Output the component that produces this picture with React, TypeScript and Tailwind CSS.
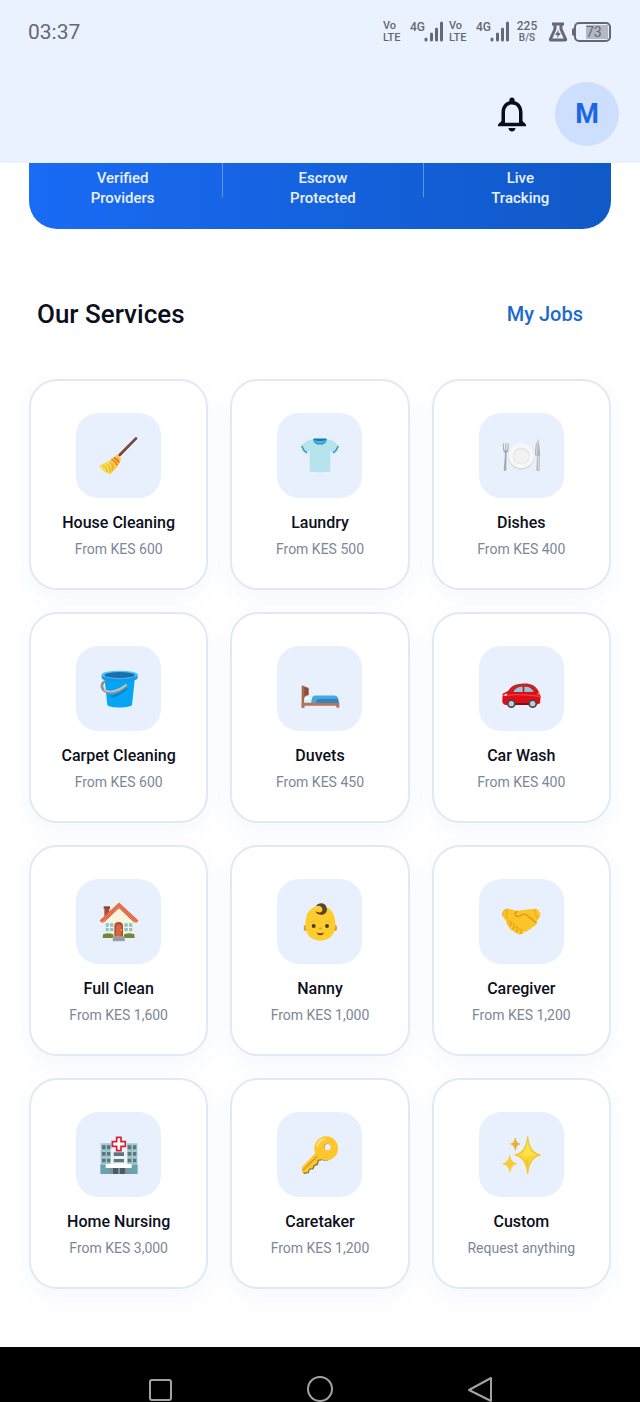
import { Fragment, type ReactNode } from "react";
import { MdNotificationsNone } from "react-icons/md";

interface Service {
  name: string;
  price: string;
  icon: ReactNode;
}

const stats = [
  ["Verified", "Providers"],
  ["Escrow", "Protected"],
  ["Live", "Tracking"],
];

// All service drawings share a 120 x 120 grid
function Drawing({ children }: { children: ReactNode }) {
  return (
    <svg viewBox="0 0 120 120" className="h-10 w-10" aria-hidden="true">
      {children}
    </svg>
  );
}

const broom = (
  <Drawing>
    <path d="M62 57L111 7" stroke="#6d4037" strokeWidth="8" strokeLinecap="round" />
    <path d="M62 54L109 7" stroke="#8f5d4d" strokeWidth="3" strokeLinecap="round" />
    <path d="M54 55L66 67C62 88 48 101 35 113C29 118 1 98 2 88C20 82 40 72 54 55Z" fill="#fbc936" />
    <path d="M2 88C12 84 22 80 30 75C36 86 38 100 35 113C27 118 1 98 2 88Z" fill="#f9dc5b" />
    <path d="M12 89C20 92 24 98 24 108M22 83C32 90 34 100 33 110M34 80C42 86 42 94 40 103" stroke="#e2a61e" strokeWidth="3" fill="none" />
    <path d="M37 69C46 73 52 80 54 88M44 64C52 68 58 74 60 80" stroke="#e2643b" strokeWidth="4" fill="none" />
  </Drawing>
);

const shirt = (
  <Drawing>
    <path d="M41 9C52 13 68 13 79 9C98 13 109 19 116 32L100 51L91 44V106C82 110 38 110 29 106V44L20 51L4 32C11 19 22 13 41 9Z" fill="#b6e3ec" />
    <path d="M5 30C8 39 13 46 21 51M115 30C112 39 107 46 99 51" stroke="#2d9fd6" strokeWidth="5" fill="none" />
    <path d="M41 9C46 29 74 29 79 9" stroke="#2d9fd6" strokeWidth="5" fill="#62b9e2" />
    <path d="M42 9C53 16 67 16 78 9Z" fill="#1479b8" stroke="#1479b8" strokeWidth="3" />
  </Drawing>
);

const dishes = (
  <Drawing>
    <path d="M5 22L7 45Q9 50 12 51L8 103Q11 107 16 103L17 51Q21 49 22 45L23 22H20L19 43H16V22H13V43H10L8 22Z" fill="#a8abad" />
    <path d="M113 9Q101 20 102 58L108 60L106 103Q111 107 116 103V60L118 57Z" fill="#b4b6b8" />
    <path d="M113 12Q106 26 107 56M112 60V102" stroke="#d9dadb" strokeWidth="3" fill="none" />
    <circle cx="61" cy="62" r="39" fill="#d4d6d8" />
    <circle cx="61" cy="59" r="38" fill="#f7f7f7" />
    <circle cx="61" cy="60" r="25" fill="#e1e2e3" />
    <circle cx="61" cy="61" r="22" fill="#f2f2f2" />
  </Drawing>
);

const bucket = (
  <Drawing>
    <path d="M16 24L25 108C30 118 92 118 99 108L108 24Z" fill="#04a5f4" />
    <path d="M8 17V27C12 42 112 42 116 27V17Z" fill="#1799df" />
    <ellipse cx="62" cy="17" rx="54" ry="12" fill="#4fc3f7" />
    <ellipse cx="62" cy="18" rx="46" ry="9" fill="#176fae" />
    <path d="M35 83C52 80 68 73 83 58" stroke="#0783c8" strokeWidth="6" fill="none" />
    <path d="M17 38C6 44 6 58 17 66C32 76 62 68 82 50" stroke="#919191" strokeWidth="8" strokeLinecap="round" fill="none" />
    <path d="M17 63C32 73 60 65 81 48" stroke="#c5c5c5" strokeWidth="5" strokeLinecap="round" fill="none" />
  </Drawing>
);

const bed = (
  <Drawing>
    <path d="M5 51Q9 48 13 52L26 57V81L13 86V116H5Z" fill="#a9674f" />
    <path d="M13 54L25 58V77L13 81Z" fill="#8d4f3c" />
    <path d="M13 87Q16 78 26 79L44 82V103H13Z" fill="#d8eff7" />
    <path d="M15 88Q23 80 38 87Q36 93 15 92Z" fill="#f5fcff" />
    <path d="M42 80H105Q116 82 117 102H35Q34 86 42 80Z" fill="#2b87c8" />
    <path d="M44 80H105Q112 82 114 89H58Q48 89 48 102H35Q34 84 44 80Z" fill="#49a9df" />
    <path d="M5 101H118V116H110L108 110H13V116H5Z" fill="#b8735a" />
  </Drawing>
);

const car = (
  <Drawing>
    <path d="M5 74L21 66C31 52 40 45 62 44C87 42 99 47 112 65L119 82L117 103Q110 108 97 108H14Q3 105 4 94Z" fill="#dc0d18" />
    <path d="M24 66C38 49 48 46 62 46C85 43 98 47 110 65L100 65C90 53 77 51 60 53C47 55 38 61 30 70Z" fill="#b92b29" />
    <path d="M37 69C43 57 51 53 65 53V69ZM70 53C84 52 92 58 99 68L70 69Z" fill="#91cbdc" />
    <path d="M6 80C32 76 70 75 118 82" stroke="#f0443e" strokeWidth="4" fill="none" />
    <path d="M7 79L18 73L17 81Z" fill="#fff2d0" />
    <path d="M112 68L117 78L109 76Z" fill="#ff7b42" />
    <path d="M42 105H84" stroke="#7d1118" strokeWidth="6" />
    <circle cx="31" cy="104" r="13" fill="#4b4548" />
    <circle cx="95" cy="104" r="13" fill="#4b4548" />
    <circle cx="31" cy="104" r="8" fill="#c8cacc" />
    <circle cx="95" cy="104" r="8" fill="#c8cacc" />
  </Drawing>
);

const house = (
  <Drawing>
    <path d="M16 15H31V46H16Z" fill="#ad4c35" />
    <path d="M14 13H33V20H14Z" fill="#874235" />
    <path d="M17 56L60 13L105 56V107H17Z" fill="#fbf3dc" />
    <path d="M5 59L60 8L115 59" stroke="#ec6c42" strokeWidth="10" fill="none" />
    <path d="M13 61L60 17L107 61" stroke="#b94730" strokeWidth="3" fill="none" />
    <path d="M20 64H43V88H20ZM76 64H100V88H76Z" fill="#8bc4c1" />
    <path d="M31 64V88M20 76H43M88 64V88M76 76H100" stroke="#fff" strokeWidth="3" />
    <path d="M46 106V72Q46 60 59 60Q72 60 72 72V106Z" fill="#b64c32" />
    <path d="M51 103V73Q59 60 67 73V103Z" fill="#d16643" />
    <circle cx="67" cy="84" r="2" fill="#fbd66b" />
    <path d="M12 97Q28 91 43 97V108H11ZM75 97Q92 91 106 97L107 108H75Z" fill="#71883c" />
    <path d="M43 103H77V118H41Z" fill="#a5a8aa" />
    <path d="M43 108H77M41 113H78" stroke="#84888b" strokeWidth="2" />
  </Drawing>
);

const baby = (
  <Drawing>
    <ellipse cx="17" cy="78" rx="6" ry="9" fill="#d69b2b" />
    <ellipse cx="105" cy="78" rx="6" ry="9" fill="#d69b2b" />
    <path d="M61 12C90 12 106 32 106 67C106 100 88 116 61 116S16 100 16 67C16 32 32 12 61 12Z" fill="#fecd2d" />
    <path d="M47 13C56 0 76 1 80 17C84 34 68 43 53 36C50 34 47 31 47 28C57 35 70 30 67 20C65 11 55 9 47 13Z" fill="#58402c" />
    <path d="M55 9C68 4 78 14 73 26" stroke="#6e4d31" strokeWidth="2" fill="none" />
    <circle cx="41" cy="72" r="6" fill="#4b3a2c" />
    <circle cx="81" cy="72" r="6" fill="#4b3a2c" />
    <path d="M33 60Q40 55 46 59M76 59Q83 55 89 60" stroke="#efb526" strokeWidth="3" fill="none" />
    <path d="M56 78Q61 75 66 78Q61 86 56 78Z" fill="#f28b22" />
    <path d="M49 91Q61 97 73 91Q69 100 61 100Q53 100 49 91Z" fill="#754434" />
  </Drawing>
);

const handshake = (
  <Drawing>
    <path d="M21 20L48 26L72 23L99 20L107 21Q119 29 118 43L106 60Q108 65 104 68Q100 76 94 75Q91 84 83 83Q79 91 69 89Q66 99 58 96Q50 99 47 92Q37 94 35 84Q24 84 25 74Q15 71 17 60L5 43Q3 29 17 20Z" fill="#fcc429" />
    <path d="M48 28C35 37 45 47 57 42C66 34 72 34 79 41L106 62" stroke="#d99516" strokeWidth="4" strokeLinecap="round" fill="none" />
    <path d="M19 61Q26 54 31 60Q28 65 25 74Q35 60 41 66L34 84Q43 71 50 75L46 91Q57 75 62 84L58 96" stroke="#e2a01b" strokeWidth="3" fill="none" />
    <path d="M6 42Q3 28 17 22Q20 34 16 48M104 22Q100 34 110 50" stroke="#efad20" strokeWidth="4" fill="none" />
  </Drawing>
);

const hospital = (
  <Drawing>
    <path d="M5 25H37V93H5ZM84 25H115V93H84Z" fill="#a0c7cd" />
    <path d="M35 40H85V101H35Z" fill="#edf2f4" />
    <path d="M9 31H20V43H9ZM24 31H34V43H24ZM9 51H20V62H9ZM24 51H34V62H24ZM9 71H20V82H9ZM24 71H34V82H24ZM86 31H97V43H86ZM102 31H112V43H102ZM86 51H97V62H86ZM102 51H112V62H102ZM86 71H97V82H86ZM102 71H112V82H102ZM44 52H75V63H44ZM44 72H75V82H44Z" fill="#597681" />
    <path d="M4 89H116V117H4Z" fill="#69a4ac" />
    <path d="M32 98H89V117H32Z" fill="#80929b" />
    <path d="M42 99H57V117H42ZM63 99H78V117H63Z" fill="#455c66" />
    <path d="M20 87H98V99H20Z" fill="#fff" />
    <path d="M53 7H66V20H79V34H66V47H53V34H40V20H53Z" fill="#fff" stroke="#d91e36" strokeWidth="5" />
  </Drawing>
);

const keyIcon = (
  <Drawing>
    <path fillRule="evenodd" d="M84 8A34 35 0 1 1 65 76L57 78L54 90L44 94L41 103L30 104L26 115L12 117L7 108L9 99L50 57A34 35 0 0 1 84 8ZM83 27A10 10 0 1 0 84 47A10 10 0 0 0 83 27Z" fill="#8f8236" />
    <path fillRule="evenodd" d="M79 4A36 36 0 1 1 64 73L53 74L50 86L40 91L37 99L27 101L23 112L10 112L5 105L6 96L46 55A36 36 0 0 1 79 4ZM82 26A10 10 0 1 0 82 46A10 10 0 0 0 82 26Z" fill="#fdc62d" />
    <path d="M10 104L50 65" stroke="#dc951f" strokeWidth="4" strokeLinecap="round" />
    <path d="M52 33Q57 15 73 12" stroke="#ffe57c" strokeWidth="6" strokeLinecap="round" fill="none" />
  </Drawing>
);

const sparkles = (
  <Drawing>
    <path d="M80 6Q84 52 117 60Q84 68 80 115Q76 68 43 60Q76 52 80 6Z" fill="#fcd638" stroke="#f4c52d" strokeWidth="4" strokeLinejoin="round" />
    <path d="M80 18Q82 53 105 60Q80 58 75 66Q73 59 59 60Q76 53 80 18Z" fill="#ffe34b" />
    <path d="M43 9Q45 25 57 27Q45 30 43 46Q40 30 29 27Q40 25 43 9Z" fill="#eaae31" stroke="#eaae31" strokeWidth="2" />
    <path d="M26 61Q29 83 48 86Q30 90 27 112Q23 90 5 86Q23 83 26 61Z" fill="#f9cb39" stroke="#f9cb39" strokeWidth="2" />
    <path d="M83 70L80 115Q76 86 72 76Z" fill="#f5c52e" />
  </Drawing>
);

const services: Service[] = [
  { name: "House Cleaning", price: "From KES 600", icon: broom },
  { name: "Laundry", price: "From KES 500", icon: shirt },
  { name: "Dishes", price: "From KES 400", icon: dishes },
  { name: "Carpet Cleaning", price: "From KES 600", icon: bucket },
  { name: "Duvets", price: "From KES 450", icon: bed },
  { name: "Car Wash", price: "From KES 400", icon: car },
  { name: "Full Clean", price: "From KES 1,600", icon: house },
  { name: "Nanny", price: "From KES 1,000", icon: baby },
  { name: "Caregiver", price: "From KES 1,200", icon: handshake },
  { name: "Home Nursing", price: "From KES 3,000", icon: hospital },
  { name: "Caretaker", price: "From KES 1,200", icon: keyIcon },
  { name: "Custom", price: "Request anything", icon: sparkles },
];

function Signal() {
  return (
    <div className="flex items-start gap-2">
      <div className="w-[19px] text-[11px] font-medium leading-3">
        <div>Vo</div>
        <div>LTE</div>
      </div>
      <div className="flex h-[22px]">
        <span className="w-[14px] text-[12px] font-medium leading-[14px]">4G</span>
        <svg viewBox="0 0 19 22" className="h-[22px] w-[19px]" aria-hidden="true">
          <path d="M2 19V20M7.500 14V20M12.500 9V20M17.500 3V20" stroke="currentColor" strokeWidth="3" strokeLinecap="round" />
        </svg>
      </div>
    </div>
  );
}

function StatusBar() {
  return (
    <div className="flex h-16 items-center justify-between pl-7 pr-[29px] text-[#656973]">
      <span className="text-[21px] leading-6">03:37</span>
      <div className="flex items-center gap-[6px]">
        <Signal />
        <Signal />
        <div className="ml-px w-[22px] text-center font-medium">
          <div className="text-[12px] leading-3">225</div>
          <div className="text-[10px] leading-3">B/S</div>
        </div>
        <div className="ml-1 flex items-center gap-1">
          <svg viewBox="0 0 20 20" className="h-5 w-5" fill="none" stroke="currentColor" aria-hidden="true">
            <path d="M4 2H16M7 2V7L2.500 17Q2 18 3 18H17Q18 18 17.500 17L13 7V2" strokeWidth="3" strokeLinejoin="round" />
            <path d="M10.500 8L7 13H9.500L9 16L13 11H10.500Z" fill="currentColor" stroke="none" />
          </svg>
          <div className="flex items-center">
            <span className="h-2 w-[2px] rounded-l bg-[#656973]" />
            <div className="h-5 w-[37px] rounded-[5px] border-2 border-[#656973] p-px">
              <div className="ml-[9px] flex h-full items-center bg-[#b4b8c2] text-[14px]">73</div>
            </div>
          </div>
        </div>
      </div>
    </div>
  );
}

function ServiceCard({ service }: { service: Service }) {
  return (
    <button
      type="button"
      className="flex flex-col items-center rounded-[28px] border-2 border-[#e2e8f4] bg-white pb-[29px] pt-8 shadow-[0_8px_24px_rgba(30,100,240,0.05)]"
    >
      <span className="flex h-[85px] w-[85px] items-center justify-center rounded-[22px] bg-[#e8f0fe]">
        {service.icon}
      </span>
      <span className="mt-[13px] whitespace-nowrap text-[16px] font-medium leading-6 text-[#0b0f1c]">{service.name}</span>
      <span className="mt-1 whitespace-nowrap text-[14px] leading-5 text-[#7c8799]">{service.price}</span>
    </button>
  );
}

export default function App() {
  return (
    <div className="bg-white font-[Roboto,sans-serif]">
      <header className="bg-[#ebf2ff]">
        <StatusBar />
        <div className="flex items-center justify-end gap-[22px] pb-[17px] pr-[21px] pt-[18px]">
          <button type="button" aria-label="Notifications" className="text-[#080d19]">
            <MdNotificationsNone className="h-[42px] w-[42px]" />
          </button>
          <button
            type="button"
            aria-label="Profile"
            className="h-16 w-16 rounded-full bg-[#cddffc] text-[27px] font-bold text-[#1c66e5]"
          >
            M
          </button>
        </div>
      </header>

      <main className="px-[29px]">
        <section className="flex items-start justify-around rounded-b-[28px] bg-linear-to-r from-[#1a6bf5] to-[#1059c8] px-7 pb-[21px] text-center text-[15px] font-medium leading-5 text-[#e9f2ff]">
          {stats.map(([top, bottom], index) => (
            <Fragment key={top}>
              {index > 0 && <div className="h-[34px] w-px bg-[#5c97f2]" />}
              <p className="pt-[5px]">
                {top}
                <br />
                {bottom}
              </p>
            </Fragment>
          ))}
        </section>

        <div className="mt-[69px] flex items-center justify-between pl-2 pr-7">
          <h1 className="text-[26px] font-medium leading-8 text-[#0b0f1c]">Our Services</h1>
          <a href="#jobs" className="text-[20px] font-medium leading-8 text-[#1e68cf]">
            My Jobs
          </a>
        </div>

        <section className="mt-[49px] grid grid-cols-3 gap-[22px]">
          {services.map((service) => (
            <ServiceCard key={service.name} service={service} />
          ))}
        </section>
      </main>

      {/* System navigation */}
      <nav className="mt-[58px] grid grid-cols-3 justify-items-center bg-black px-20 pt-[29px] text-[#a3a3a3]">
        <button type="button" aria-label="Recent apps">
          <svg viewBox="0 0 26 26" className="h-[26px] w-[26px]" fill="none" stroke="currentColor" strokeWidth="2">
            <rect x="3" y="4" width="21" height="20" rx="2" />
          </svg>
        </button>
        <button type="button" aria-label="Home">
          <svg viewBox="0 0 26 26" className="h-[26px] w-[26px]" fill="none" stroke="currentColor" strokeWidth="2">
            <circle cx="13" cy="13" r="12" />
          </svg>
        </button>
        <button type="button" aria-label="Back">
          <svg viewBox="0 0 26 26" className="h-[26px] w-[26px]" fill="none" stroke="currentColor" strokeWidth="2" strokeLinejoin="round">
            <path d="M24 2V25L2 14Z" />
          </svg>
        </button>
      </nav>
    </div>
  );
}
